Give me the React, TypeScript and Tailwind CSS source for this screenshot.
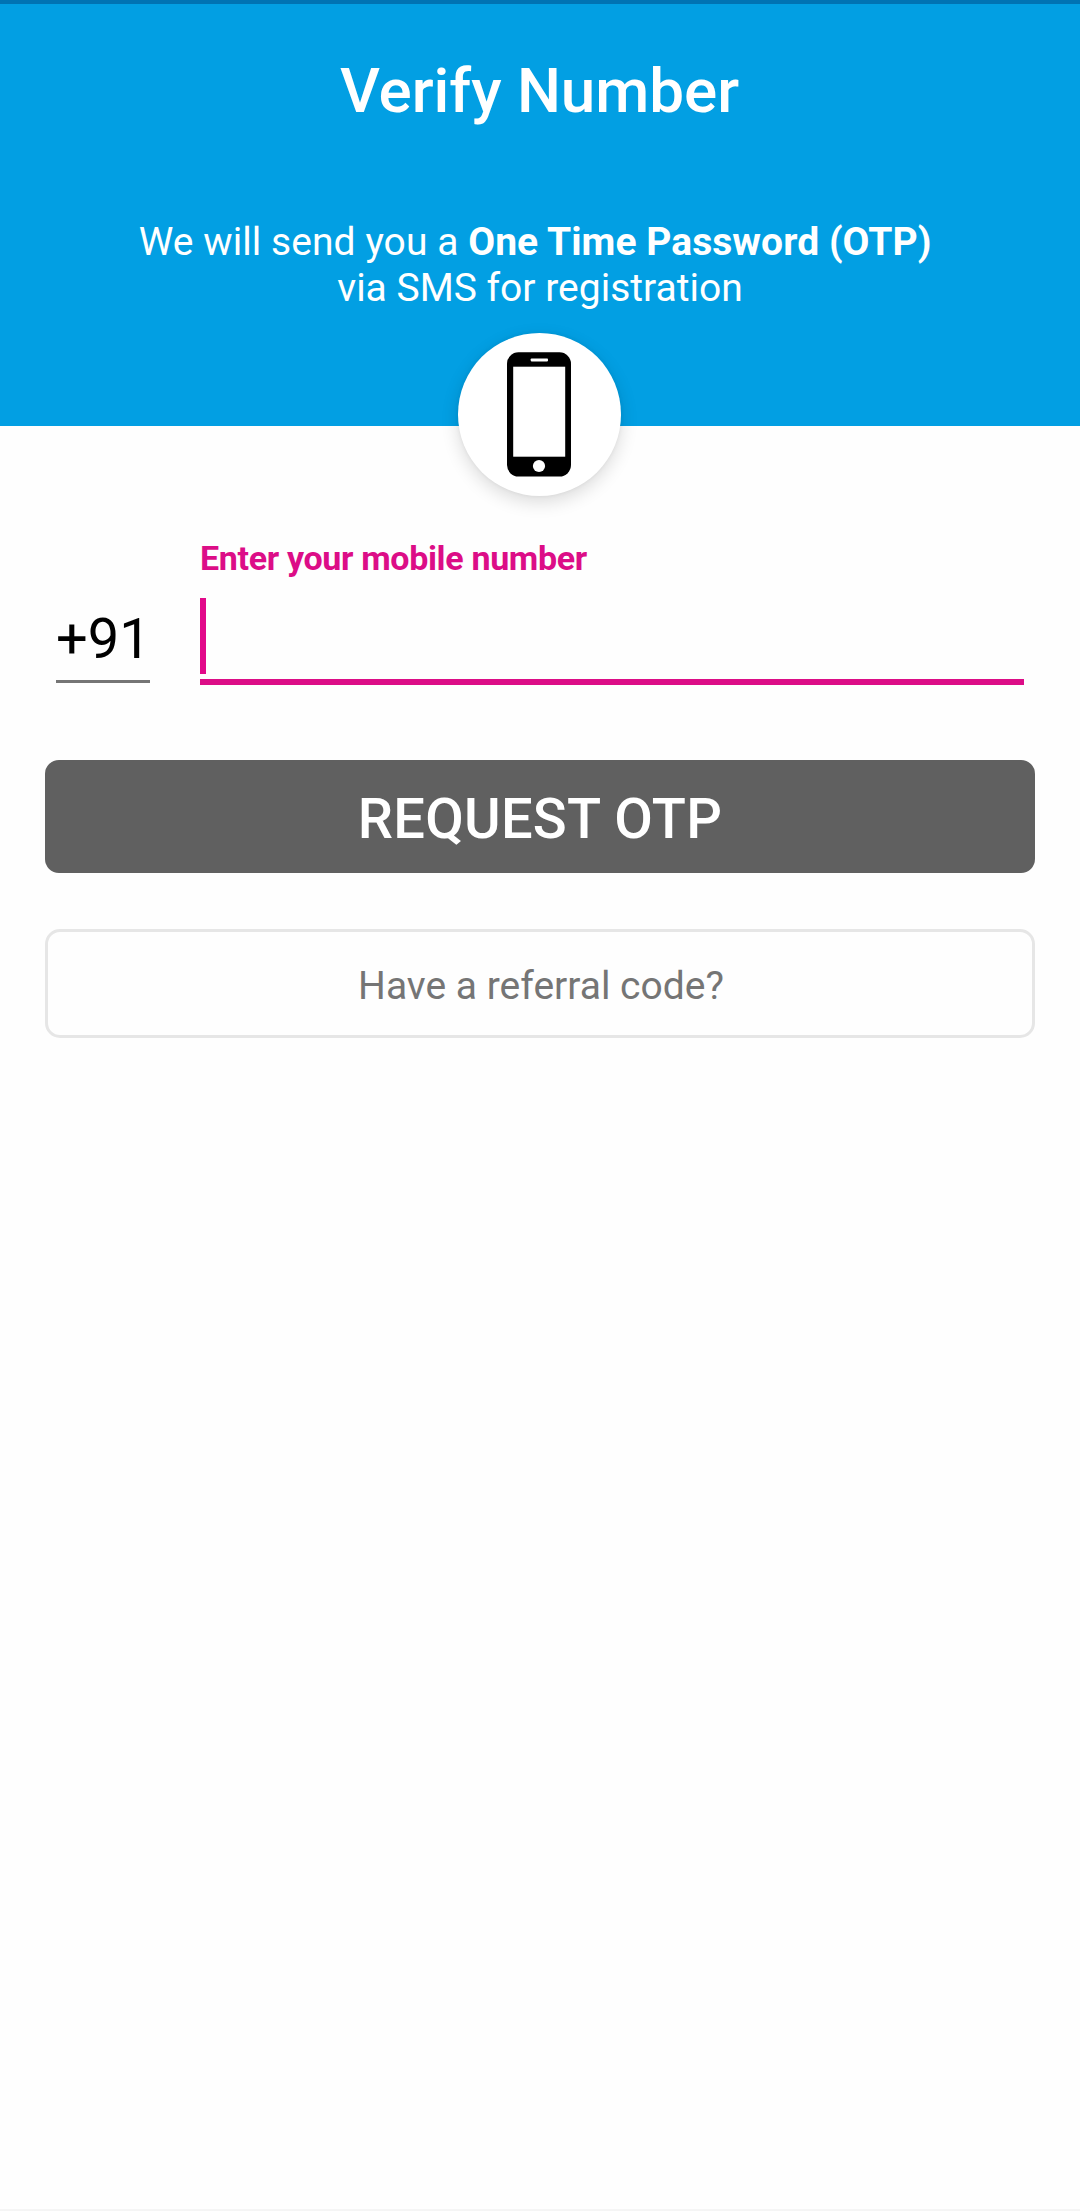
function PhoneIcon() {
    return (
        <svg width="64" height="125" viewBox="0 0 64 125" className="mr-[2px] block">
            <rect x="0" y="0.3" width="64" height="124.2" rx="11.5" fill="#000" />
            {/* screen */}
            <rect x="6.2" y="14.7" width="52" height="90" fill="#fff" />
            {/* speaker */}
            <rect x="23.7" y="6.4" width="17.3" height="3" rx="0.8" fill="#fff" />
            {/* home button */}
            <circle cx="32" cy="114" r="6.1" fill="#fff" />
        </svg>
    )
}

function Header() {
    return (
        <header className="relative h-[426px] border-t-4 border-[#0073b3] bg-[#029fe3] pt-[51px] text-center text-white">
            <h1 className="pr-px text-[62px] leading-[72px] font-medium tracking-[-0.05px]">Verify Number</h1>
            <p className="mt-[92px] text-[39px] leading-[46px]">
                <span className="tracking-[0.06px]">
                    We will send you a <b className="font-bold">One Time Password (OTP)</b>&nbsp;
                </span>
                <br />
                via SMS for registration
            </p>

            {/* badge overlapping the header edge */}
            <div className="absolute top-[329px] left-[458px] flex h-[163px] w-[163px] items-center justify-center rounded-full bg-white shadow-[0_6px_18px_rgba(0,0,0,0.14),0_0_4px_rgba(0,0,0,0.06)]">
                <PhoneIcon />
            </div>
        </header>
    )
}

function NumberField() {
    return (
        <div className="flex items-end px-[56px] pt-[112px]">
            <div className="mr-[50px] mb-[2px] w-[94px] border-b-[3px] border-[#757575] pb-[9px] text-[56px] leading-[64px] text-black">
                +91
            </div>
            <div className="flex-1">
                <div className="text-[34px] leading-[40px] font-bold tracking-[-0.34px] text-[#dc0d87]">
                    Enter your mobile number
                </div>
                {/* focused input with caret */}
                <div className="mt-5 h-[87px] border-b-[6px] border-[#dc0d87]">
                    <div className="h-[76px] w-[6px] bg-[#e20a8a]" />
                </div>
            </div>
        </div>
    )
}

function App() {
    return (
        <div className="flex h-[2211px] w-[1080px] flex-col border-b-2 border-[#f5f5f5] bg-[#fefefe] font-['Roboto',sans-serif]">
            <Header />
            <main>
                <NumberField />
                <div className="flex flex-col gap-14 px-[45px] pt-[75px]">
                    <button className="h-[113px] rounded-[14px] bg-[#606060] pt-[5px] text-[56px] leading-[64px] font-medium tracking-[0.25px] text-white">
                        REQUEST OTP
                    </button>
                    <button className="h-[109px] rounded-[15px] border-3 border-[#e6e6e6] pt-[4px] pl-[2px] text-[39px] leading-[46px] text-[#757575]">
                        Have a referral code?
                    </button>
                </div>
            </main>
        </div>
    )
}

export default App
